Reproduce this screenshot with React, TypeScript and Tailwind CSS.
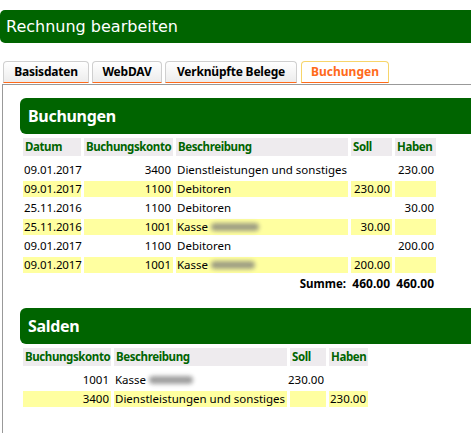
import React from 'react'

type Row = {
  date: string
  konto: string
  text: string
  blur?: number
  soll?: string
  haben?: string
  hi?: boolean
}

const buchungen: Row[] = [
  { date: '09.01.2017', konto: '3400', text: 'Dienstleistungen und sonstiges', haben: '230.00' },
  { date: '09.01.2017', konto: '1100', text: 'Debitoren', soll: '230.00', hi: true },
  { date: '25.11.2016', konto: '1100', text: 'Debitoren', haben: '30.00' },
  { date: '25.11.2016', konto: '1001', text: 'Kasse', blur: 48, soll: '30.00', hi: true },
  { date: '09.01.2017', konto: '1100', text: 'Debitoren', haben: '200.00' },
  { date: '09.01.2017', konto: '1001', text: 'Kasse', blur: 44, soll: '200.00', hi: true },
]

const salden: Row[] = [
  { date: '', konto: '1001', text: 'Kasse', blur: 44, soll: '230.00' },
  { date: '', konto: '3400', text: 'Dienstleistungen und sonstiges', haben: '230.00', hi: true },
]

const tabs = [
  { label: 'Basisdaten', w: 'w-[86px]' },
  { label: 'WebDAV', w: 'w-[70px]' },
  { label: 'Verknüpfte Belege', w: 'w-[132px]' },
]

function Blurred({ w }: { w: number }) {
  // geschwärzter Name, nur als verwischter Fleck
  return (
    <span
      className="ml-[3px] inline-block h-[8px] rounded-full bg-[#777] opacity-70 blur-[2px]"
      style={{ width: w }}
    />
  )
}

function Cell({ children, hi, right, className = '' }: { children?: React.ReactNode; hi?: boolean; right?: boolean; className?: string }) {
  return (
    <div
      className={`flex h-[16px] items-center whitespace-nowrap ${right ? 'justify-end pr-[2px]' : 'pl-[1px]'} ${hi ? 'bg-[#ffffa0]' : ''} ${className}`}
    >
      {children}
    </div>
  )
}

function Head({ children }: { children: React.ReactNode }) {
  return (
    <div className="flex h-[18px] items-center whitespace-nowrap bg-[#eeebee] pl-[2px] text-[11.5px] font-bold tracking-[-0.4px] text-[#006400]">
      {children}
    </div>
  )
}

function SectionBar({ title }: { title: string }) {
  return (
    <div className="flex h-[36px] items-center rounded-l-[6px] bg-[#006400] pl-[8px] text-[16px] font-bold tracking-[-0.3px] text-white">
      {title}
    </div>
  )
}

export default function App() {
  return (
    <div className="h-[433px] w-[471px] overflow-hidden bg-white font-['Noto_Sans',sans-serif] text-black">
      {/* Titelleiste */}
      <div className="mt-[10px] flex h-[33px] items-center rounded-l-[5px] bg-[#006400] pl-[6px] font-['DejaVu_Sans',sans-serif] text-[16px] text-white">
        Rechnung bearbeiten
      </div>

      {/* Tabs */}
      <div className="mt-[18px] flex h-[22px] gap-[3px] pl-[3px]">
        {tabs.map((t) => (
          <div
            key={t.label}
            className={`${t.w} flex items-center justify-center rounded-t-[4px] border border-[#cfcfcf] border-b-[#ff6a1a] bg-gradient-to-b from-white to-[#ececec] text-[12px] font-bold tracking-[-0.2px] text-black`}
          >
            {t.label}
          </div>
        ))}
        <div className="ml-[1px] flex w-[88px] items-center justify-center rounded-t-[4px] border border-[#f7d56a] border-b-[#ff6a1a] bg-white text-[12px] font-bold text-[#ff6a1a]">
          Buchungen
        </div>
      </div>

      {/* Inhalt */}
      <div className="ml-[2px] mt-[1px] border-l border-t border-[#999] pl-[17px] pt-[13px]">
        <SectionBar title="Buchungen" />
        <div className="mt-[4px] pl-[3px] text-[11.5px]">
          <div className="grid grid-cols-[58px_89px_172px_41px_41px] gap-x-[3px]">
            <Head>Datum</Head>
            <Head>Buchungskonto</Head>
            <Head>Beschreibung</Head>
            <Head>Soll</Head>
            <Head>Haben</Head>
          </div>
          <div className="mt-[6px] grid grid-cols-[58px_89px_172px_41px_41px] gap-[3px]">
            {buchungen.map((r, i) => (
              <React.Fragment key={i}>
                <Cell hi={r.hi} className="tracking-[-0.1px]">{r.date}</Cell>
                <Cell hi={r.hi} right>{r.konto}</Cell>
                <Cell hi={r.hi}>
                  {r.text}
                  {r.blur && <Blurred w={r.blur} />}
                </Cell>
                <Cell hi={r.hi} right>{r.soll}</Cell>
                <Cell hi={r.hi} right>{r.haben}</Cell>
              </React.Fragment>
            ))}
            <Cell />
            <Cell />
            <Cell right className="font-bold text-[11.5px]">Summe:</Cell>
            <Cell right className="font-bold text-[12px]">460.00</Cell>
            <Cell right className="font-bold text-[12px]">460.00</Cell>
          </div>
        </div>

        <div className="mt-[16px]">
          <SectionBar title="Salden" />
        </div>
        <div className="mt-[4px] pl-[3px] text-[11.5px]">
          <div className="grid grid-cols-[88px_173px_36px_39px] gap-x-[3px]">
            <Head>Buchungskonto</Head>
            <Head>Beschreibung</Head>
            <Head>Soll</Head>
            <Head>Haben</Head>
          </div>
          <div className="mt-[6px] grid grid-cols-[88px_173px_36px_39px] gap-[3px] pb-[40px]">
            {salden.map((r, i) => (
              <React.Fragment key={i}>
                <Cell hi={r.hi} right>{r.konto}</Cell>
                <Cell hi={r.hi}>
                  {r.text}
                  {r.blur && <Blurred w={r.blur} />}
                </Cell>
                <Cell hi={r.hi} right>{r.soll}</Cell>
                <Cell hi={r.hi} right>{r.haben}</Cell>
              </React.Fragment>
            ))}
          </div>
        </div>
      </div>
    </div>
  )
}
